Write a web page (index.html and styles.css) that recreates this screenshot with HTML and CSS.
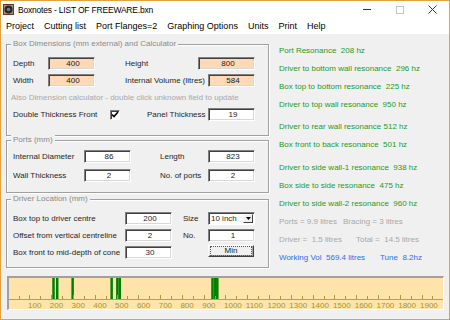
FILE: index.html
```html
<!DOCTYPE html>
<html lang="en">

<head>
    <meta charset="UTF-8">
    <meta name="viewport" content="width=device-width, initial-scale=1.0">
    <title>Boxnotes</title>
    <link rel="stylesheet" href="styles.css">
</head>

<body>
    <div class="window">
        <div class="titlebar">
            <svg class="app-icon" viewBox="0 0 11 11" width="11" height="11">
                <rect x="0.5" y="0.5" width="10" height="10" fill="#9c958c" stroke="#6e3527" />
                <circle cx="5.5" cy="5.5" r="4" fill="#262626" />
                <circle cx="5.5" cy="5.5" r="1.8" fill="#7a7a7a" />
            </svg>
            <span class="title">Boxnotes - LIST OF FREEWARE.bxn</span>
            <div class="caption-buttons">
                <span class="cap"><svg width="8" height="1"><rect width="8" height="1" fill="#333" /></svg></span>
                <span class="cap"><svg width="8" height="8"><rect x="0.5" y="0.5" width="7" height="7" fill="none" stroke="#c4c4c4" /></svg></span>
                <span class="cap"><svg width="9" height="9"><path d="M0.5 0.5l8 8M8.5 0.5l-8 8" stroke="#333" /></svg></span>
            </div>
        </div>

        <div class="menubar">
            <span>Project</span>
            <span>Cutting list</span>
            <span>Port Flanges=2</span>
            <span>Graphing Options</span>
            <span>Units</span>
            <span>Print</span>
            <span>Help</span>
        </div>

        <div class="client">
            <div class="main">
                <div class="forms">
                    <div class="group group-box">
                        <span class="group-title">Box Dimensions (mm external) and Calculator</span>
                        <div class="rows">
                            <div class="row">
                                <label class="lbl w-35">Depth</label>
                                <input class="field peach" value="400" readonly>
                                <label class="lbl w-73 ml-30">Height</label>
                                <input class="field peach wide" value="800" readonly>
                            </div>
                            <div class="row">
                                <label class="lbl w-35">Width</label>
                                <input class="field peach" value="400" readonly>
                                <label class="lbl w-83 ml-30">Internal Volume (litres)</label>
                                <input class="field peach" value="584" readonly>
                            </div>
                            <div class="row hint">Also Dimension calculator - double click unknown field to update</div>
                            <div class="row row-check">
                                <label class="lbl w-97">Double Thickness Front</label>
                                <span class="checkbox">
                                    <svg width="8" height="8" viewBox="0 0 8 8"><path d="M1 3.5l2 2 4-4.5" fill="none" stroke="#000" stroke-width="1.6" /></svg>
                                </span>
                                <label class="lbl w-61 ml-27">Panel Thickness</label>
                                <input class="field" value="19" readonly>
                            </div>
                        </div>
                    </div>

                    <div class="group group-ports">
                        <span class="group-title">Ports (mm)</span>
                        <div class="rows">
                            <div class="row">
                                <label class="lbl w-71">Internal Diameter</label>
                                <input class="field" value="86" readonly>
                                <label class="lbl w-48 ml-29">Length</label>
                                <input class="field" value="823" readonly>
                            </div>
                            <div class="row">
                                <label class="lbl w-71">Wall Thickness</label>
                                <input class="field" value="2" readonly>
                                <label class="lbl w-48 ml-29">No. of ports</label>
                                <input class="field" value="2" readonly>
                            </div>
                        </div>
                    </div>

                    <div class="group group-driver">
                        <span class="group-title">Driver Location (mm)</span>
                        <div class="rows">
                            <div class="row">
                                <label class="lbl w-112">Box top to driver centre</label>
                                <input class="field" value="200" readonly>
                                <label class="lbl w-25 ml-11">Size</label>
                                <div class="combo">
                                    <span>10 inch</span>
                                    <span class="combo-btn">
                                        <svg width="5" height="3"><path d="M0 0h5L2.5 3z" fill="#000" /></svg>
                                    </span>
                                </div>
                            </div>
                            <div class="row">
                                <label class="lbl w-112">Offset from vertical centreline</label>
                                <input class="field" value="2" readonly>
                                <label class="lbl w-25 ml-11">No.</label>
                                <input class="field" value="1" readonly>
                            </div>
                            <div class="row">
                                <label class="lbl w-112">Box front to mid-depth of cone</label>
                                <input class="field" value="30" readonly>
                                <button class="btn ml-36"><span>Min</span></button>
                            </div>
                        </div>
                    </div>
                </div>

                <div class="results">
                    <p class="res">Port Resonance  208 hz</p>
                    <p class="res">Driver to bottom wall resonance  296 hz</p>
                    <p class="res">Box top to bottom resonance  225 hz</p>
                    <p class="res">Driver to top wall resonance  950 hz</p>
                    <p class="res gap-4">Driver to rear wall resonance 512 hz</p>
                    <p class="res">Box front to back resonance  501 hz</p>
                    <p class="res gap-5">Driver to side wall-1 resonance  938 hz</p>
                    <p class="res">Box side to side resonance  475 hz</p>
                    <p class="res">Driver to side wall-2 resonance  960 hz</p>
                    <p class="res muted"><span class="col-a">Ports = 9.9 litres</span>Bracing = 3 litres</p>
                    <p class="res muted"><span class="col-b">Driver =  1.5 litres</span>Total =  14.5 litres</p>
                    <p class="res blue"><span class="col-c">Working Vol  569.4 litres</span>Tune  8.2hz</p>
                </div>
            </div>

            <div class="graph">
                <svg width="434" height="31" viewBox="0 0 434 31">
                    <g fill="#008000">
                        <rect x="43.25" y="0" width="2.5" height="21" />
                        <rect x="46.95" y="0" width="2.5" height="21" />
                        <rect x="62.4" y="0" width="2.5" height="21" />
                        <rect x="101.4" y="0" width="2.5" height="21" />
                        <rect x="107.1" y="0" width="2.5" height="21" />
                        <rect x="109.5" y="0" width="2.5" height="21" />
                        <rect x="202.25" y="0" width="2.5" height="21" />
                        <rect x="204.85" y="0" width="2.5" height="21" />
                        <rect x="207.05" y="0" width="2.5" height="21" />
                    </g>
                    <line x1="0" y1="21.5" x2="434" y2="21.5" stroke="#b4a446" />
                    <path stroke="#a99a3a" d="M20.5 17v4M42.5 17v4M64.5 17v4M86.5 17v4M108.5 17v4M129.5 17v4M151.5 17v4M173.5 17v4M195.5 17v4M216.5 17v4M238.5 17v4M260.5 17v4M282.5 17v4M304.5 17v4M325.5 17v4M347.5 17v4M369.5 17v4M391.5 17v4M413.5 17v4" />
                    <path stroke="#a99a3a" d="M10.5 18v3M31.5 18v3M53.5 18v3M75.5 18v3M97.5 18v3M118.5 18v3M140.5 18v3M162.5 18v3M184.5 18v3M206.5 18v3M227.5 18v3M249.5 18v3M271.5 18v3M293.5 18v3M315.5 18v3M336.5 18v3M358.5 18v3M380.5 18v3M402.5 18v3M423.5 18v3" />
                    <g class="axis-labels">
                        <text x="19" y="30">100</text>
                        <text x="40.8" y="30">200</text>
                        <text x="62.5" y="30">300</text>
                        <text x="84.3" y="30">400</text>
                        <text x="106.1" y="30">500</text>
                        <text x="127.9" y="30">600</text>
                        <text x="149.7" y="30">700</text>
                        <text x="171.4" y="30">800</text>
                        <text x="193.2" y="30">900</text>
                        <text x="215" y="30">1000</text>
                        <text x="236.8" y="30">1100</text>
                        <text x="258.6" y="30">1200</text>
                        <text x="280.3" y="30">1300</text>
                        <text x="302.1" y="30">1400</text>
                        <text x="323.9" y="30">1500</text>
                        <text x="345.7" y="30">1600</text>
                        <text x="367.5" y="30">1700</text>
                        <text x="389.2" y="30">1800</text>
                        <text x="411" y="30">1900</text>
                    </g>
                </svg>
            </div>
        </div>
    </div>
</body>

</html>
```

FILE: styles.css
```css
* {
    box-sizing: border-box;
}

body {
    margin: 0;
    font-family: "Liberation Sans", Arial, sans-serif;
    font-size: 8px;
    color: #262626;
}

.window {
    width: 450px;
    height: 320px;
    border: 1px solid #e2a23c;
    background-color: #f0f0f0;
    display: flex;
    flex-direction: column;
    overflow: hidden;
}

/* title bar */
.titlebar {
    height: 17px;
    background-color: #fff;
    display: flex;
    align-items: center;
}

.app-icon {
    margin-left: 2px;
    flex-shrink: 0;
}

.title {
    margin-left: 4px;
    font-size: 8.5px;
    letter-spacing: -0.2px;
    color: #000;
}

.caption-buttons {
    margin-left: auto;
    display: flex;
    height: 100%;
}

.cap {
    width: 33px;
    display: flex;
    align-items: center;
    justify-content: center;
}

.menubar {
    height: 16px;
    background-color: #fff;
    display: flex;
    align-items: center;
    gap: 10px;
    padding-left: 5px;
    font-size: 9px;
    color: #000;
}

/* client area */
.client {
    flex: 1;
    display: flex;
    flex-direction: column;
}

.main {
    display: flex;
}

.forms {
    padding: 10px 0 0 5px;
    display: flex;
    flex-direction: column;
}

.group {
    width: 263px;
    padding: 0 6px;
    border: 1px solid #a0a0a0;
    box-shadow: inset 1px 1px 0 #fff, 1px 1px 0 #fff;
}

.group-title {
    display: block;
    width: max-content;
    height: 10px;
    line-height: 10px;
    margin: -6px 0 0 -2px;
    padding: 0 2px;
    background-color: #f0f0f0;
    color: #8a8a8a;
}

.group-box {
    padding-bottom: 14px;
}

.group-box .rows {
    margin-top: 8px;
}

.group-box .row + .row {
    margin-top: 4px;
}

.group-box .hint {
    margin: 3px 0 0 -2px;
}

.group-box .row-check {
    margin-top: 6px;
}

.group-ports {
    margin-top: 4px;
    padding-bottom: 10px;
}

.group-ports .rows {
    margin-top: 5px;
}

.group-ports .row + .row {
    margin-top: 6px;
}

.group-driver {
    margin-top: 6px;
    padding-bottom: 8px;
}

.group-driver .rows {
    margin-top: 8px;
}

.group-driver .row + .row {
    margin-top: 4px;
}

.row {
    display: flex;
    align-items: center;
    height: 13px;
}

.hint {
    color: #a8a8a8;
}

.lbl {
    flex-shrink: 0;
    white-space: nowrap;
}

.w-25 { width: 25px; }
.w-35 { width: 35px; }
.w-48 { width: 48px; }
.w-61 { width: 61px; }
.w-71 { width: 71px; }
.w-73 { width: 73px; }
.w-83 { width: 83px; }
.w-97 { width: 97px; }
.w-112 { width: 112px; }

.ml-11 { margin-left: 11px; }
.ml-27 { margin-left: 27px; }
.ml-29 { margin-left: 29px; }
.ml-30 { margin-left: 30px; }
.ml-36 { margin-left: 36px; }

.field {
    width: 47px;
    height: 13px;
    margin: 0;
    padding: 0 0 0 3px;
    border: 1px solid;
    border-color: #808080 #fff #fff #808080;
    box-shadow: inset 1px 1px 0 #404040, inset -1px -1px 0 #d8d8d8;
    background-color: #fff;
    font-family: inherit;
    font-size: 8px;
    color: #1a1a1a;
    text-align: center;
    outline: none;
}

.field.peach {
    background-color: #fdd9b6;
}

.field.wide {
    width: 57px;
}

.checkbox {
    width: 10px;
    height: 10px;
    border: 1px solid;
    border-color: #808080 #fff #fff #808080;
    box-shadow: inset 1px 1px 0 #404040;
    background-color: #fff;
    display: flex;
    align-items: center;
    justify-content: center;
}

.combo {
    width: 47px;
    height: 13px;
    border: 1px solid;
    border-color: #808080 #fff #fff #808080;
    box-shadow: inset 1px 1px 0 #404040;
    background-color: #fff;
    display: flex;
    align-items: center;
    padding-left: 2px;
}

.combo-btn {
    margin-left: auto;
    margin-right: 1px;
    width: 10px;
    height: 9px;
    background-color: #f0f0f0;
    border: 1px solid;
    border-color: #fff #404040 #404040 #fff;
    display: flex;
    align-items: center;
    justify-content: center;
}

.btn {
    align-self: flex-start;
    width: 46px;
    height: 12px;
    margin-top: -1px;
    padding: 1px 2px;
    border: 1px solid;
    border-color: #fff #404040 #404040 #fff;
    box-shadow: inset -1px -1px 0 #a0a0a0;
    background-color: #f0f0f0;
    font-family: inherit;
    font-size: 8px;
    color: #1a1a1a;
}

.btn span {
    display: block;
    height: 8px;
    line-height: 8px;
    outline: 1px dotted #555;
    outline-offset: 0;
}

/* results */
.results {
    margin-left: 10px;
    padding-top: 8px;
}

.res {
    margin: 0;
    line-height: 18px;
    white-space: pre;
    color: #1f9a1f;
}

.gap-4 {
    margin-top: 4px;
}

.gap-5 {
    margin-top: 5px;
}

.res.muted {
    color: #a8a8a8;
}

.res.blue {
    color: #2d6de8;
}

.col-a,
.col-b,
.col-c {
    display: inline-block;
}

.col-a { width: 64px; }
.col-b { width: 77px; }
.col-c { width: 101px; }

/* graph */
.graph {
    margin: 8px 0 0 6px;
    width: 437px;
    height: 34px;
    border-style: solid;
    border-width: 2px 1px 1px 2px;
    border-color: #a0a0a0 #fff #fff #a0a0a0;
    background-color: #fee4a9;
}

.graph svg {
    display: block;
}

.axis-labels text {
    font-family: "Liberation Sans", Arial, sans-serif;
    font-size: 8px;
    fill: #a4942f;
}
```
